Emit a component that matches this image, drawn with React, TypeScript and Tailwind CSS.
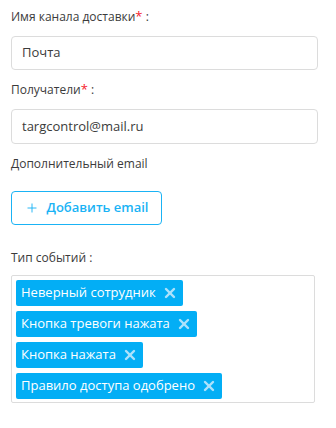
import { X, Plus } from "lucide-react";

const events = [
  "Неверный сотрудник",
  "Кнопка тревоги нажата",
  "Кнопка нажата",
  "Правило доступа одобрено",
];

function Label({ text, required }: { text: string; required?: boolean }) {
  return (
    <div className="text-[12px] leading-[20px] text-[#3b3b3b]">
      {text}
      {required && <span className="text-[#f5222d] text-[13px]">*</span>}
      {" :"}
    </div>
  );
}

export default function App() {
  return (
    <div className="min-h-screen bg-white px-[11px] pt-[6px] font-['Open_Sans',sans-serif]">
      <div className="w-[307px]">
        <Label text="Имя канала доставки" required />
        <div className="mt-[9px] h-[34px] rounded-[4px] border border-[#dcdcdc] px-[10px] flex items-center text-[13px] text-[#3b3b3b]">
          Почта
        </div>

        <div className="mt-[9px]">
          <Label text="Получатели" required />
        </div>
        <div className="mt-[9px] h-[35px] rounded-[4px] border border-[#dcdcdc] px-[10px] flex items-center text-[13px] text-[#3b3b3b]">
          targcontrol@mail.ru
        </div>

        <div className="mt-[10px] text-[12px] leading-[20px] text-[#3b3b3b]">Дополнительный email</div>

        <button className="mt-[17px] h-[34px] w-[151px] rounded-[4px] border border-[#1ab3f5] flex items-center justify-center gap-[8px] text-[13px] font-semibold text-[#1ab3f5]">
          <Plus size={14} strokeWidth={1.6} />
          Добавить email
        </button>

        <div className="mt-[23px] text-[12px] leading-[20px] text-[#3b3b3b]">Тип событий :</div>

        <div className="mt-[7px] w-[304px] rounded-[2px] border border-[#dcdcdc] px-[4px] pt-[4px] pb-[3px] flex flex-wrap gap-[5px]">
          {events.map((e) => (
            <span
              key={e}
              className="h-[26px] rounded-[2px] bg-[#03aef5] pl-[5px] pr-[5px] flex items-center gap-[6px] text-[13px] text-white"
            >
              {e}
              <X size={16} strokeWidth={3.6} className="text-[#aee2fb]" />
            </span>
          ))}
        </div>
      </div>
    </div>
  );
}
